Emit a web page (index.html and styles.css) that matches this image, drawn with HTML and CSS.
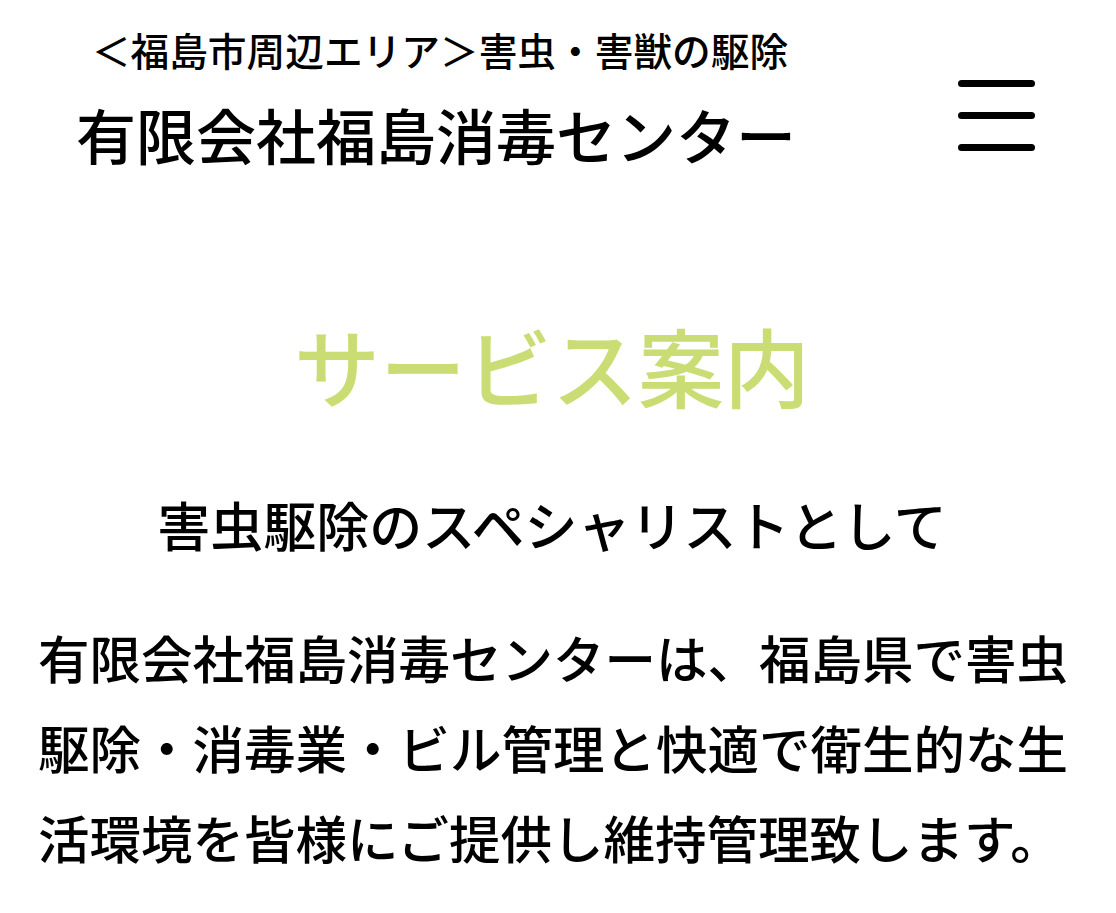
FILE: index.html
```html
<!DOCTYPE html>
<html lang="ja">
<head>
<meta charset="utf-8">
<title>有限会社福島消毒センター</title>
<link rel="stylesheet" href="styles.css">
</head>
<body>
<header class="site-header">
  <div class="brand">
    <p class="brand-tagline">＜福島市周辺エリア＞害虫・害獣の駆除</p>
    <p class="brand-name">有限会社福島消毒センター</p>
  </div>
  <button class="menu-toggle" type="button" aria-label="メニュー">
    <span class="menu-line"></span>
    <span class="menu-line"></span>
    <span class="menu-line"></span>
  </button>
</header>
<main class="service">
  <h1 class="service-title">サービス案内</h1>
  <h2 class="service-lead">害虫駆除のスペシャリストとして</h2>
  <p class="service-text">有限会社福島消毒センターは、福島県で害虫駆除・消毒業・ビル管理と快適で衛生的な生活環境を皆様にご提供し維持管理致します。</p>
</main>
</body>
</html>
```
FILE: styles.css
```css
* {
  box-sizing: border-box;
}
html, body {
  margin: 0;
  padding: 0;
  background: #ffffff;
}
body {
  font-family: "Noto Sans CJK JP", "Noto Sans", sans-serif;
  font-weight: 500;
  color: #000000;
  width: 1116px;
}
.site-header {
  display: flex;
  align-items: flex-start;
}
.brand {
  width: 872px;
  text-align: center;
  padding-top: 29px;
}
.brand-tagline {
  margin: 0;
  font-size: 38.7px;
  line-height: 40px;
  white-space: nowrap;
  transform: translateX(4px);
}
.brand-name {
  margin: 30px 0 0;
  font-size: 60px;
  line-height: 70px;
  white-space: nowrap;
}
.menu-toggle {
  margin: 80px 0 0 86px;
  padding: 0;
  width: 77px;
  border: 0;
  background: transparent;
  display: flex;
  flex-direction: column;
  gap: 25px;
}
.menu-line {
  display: block;
  width: 77px;
  height: 7px;
  border-radius: 4px;
  background: #000000;
}
.service {
  padding: 0 30px 0 38px;
}
.service-title {
  margin: 146px 0 0;
  font-size: 86px;
  line-height: 100px;
  font-weight: 500;
  color: #cadd74;
  text-align: center;
  transform: translateX(-10px);
}
.service-lead {
  margin: 79px 0 0;
  font-size: 53px;
  line-height: 60px;
  font-weight: 500;
  text-align: center;
  transform: translateX(-10px);
}
.service-text {
  margin: 58px 0 0;
  font-size: 51.5px;
  line-height: 90px;
}
```
